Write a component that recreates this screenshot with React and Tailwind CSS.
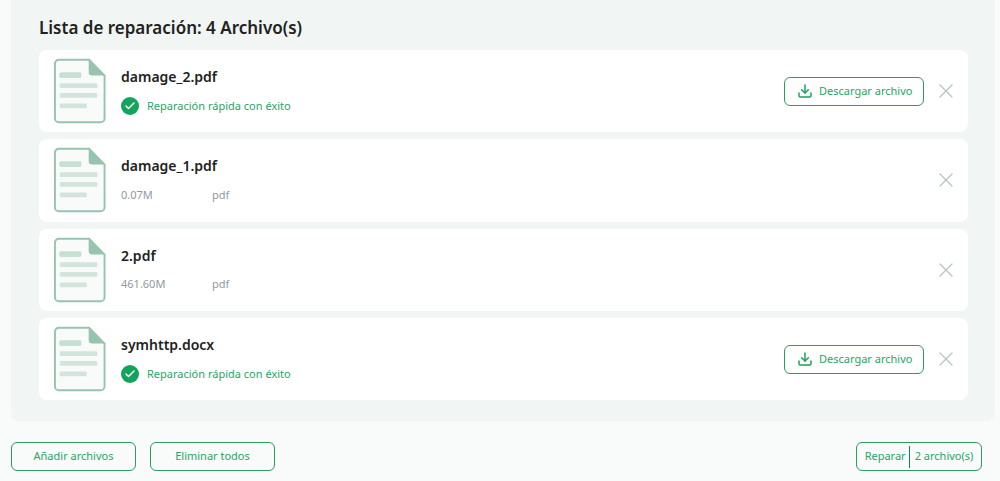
import { Download, X, Check } from 'lucide-react'

const files = [
  { name: 'damage_2.pdf', repaired: true },
  { name: 'damage_1.pdf', size: '0.07M', type: 'pdf' },
  { name: '2.pdf', size: '461.60M', type: 'pdf' },
  { name: 'symhttp.docx', repaired: true },
]

function FileIcon() {
  return (
    <svg width="52" height="66" viewBox="0 0 54 68" fill="none" className="shrink-0">
      <path d="M5 1.5h31.5L52.5 18v44.5a4 4 0 0 1-4 4H5a4 4 0 0 1-4-4v-57a4 4 0 0 1 4-4z" fill="#f8fbfa" stroke="#96c4ae" strokeWidth="2" />
      <path d="M36 1l17 17H40a4 4 0 0 1-4-4z" fill="#96c4ae" />
      <rect x="6" y="15" width="22" height="5" rx="1" fill="#c6e0d4" stroke="#b2d4c4" strokeWidth="0.5" />
      <rect x="6" y="26" width="39" height="5" rx="1" fill="#d2e5dc" />
      <rect x="6" y="36" width="39" height="5" rx="1" fill="#d2e5dc" />
      <rect x="6" y="47" width="28" height="5" rx="1" fill="#d2e5dc" />
    </svg>
  )
}

function FileRow({ file }) {
  return (
    <div className="flex h-[82.3px] items-center rounded-lg bg-white pl-[15px] pr-[10px]">
      <FileIcon />
      <div className="ml-[15px] flex min-w-0 flex-1 flex-col">
        <p className="pt-px text-[14px] leading-[20px] font-semibold text-[#222]">{file.name}</p>
        {file.repaired ? (
          <div className="mt-[9px] flex h-[20px] items-center gap-[8px]">
            <span className="flex h-[18px] w-[18px] items-center justify-center rounded-full bg-[#12a35c]">
              <Check className="h-3 w-3 text-white" strokeWidth={3} />
            </span>
            <span className="text-[11px] text-[#27a566]">Reparación rápida con éxito</span>
          </div>
        ) : (
          <div className="mt-[9px] flex h-[20px] items-center text-[11px] text-[#8f9a9c]">
            <span className="w-[91px]">{file.size}</span>
            <span>{file.type}</span>
          </div>
        )}
      </div>
      {file.repaired && (
        <button className="flex h-[29px] w-[140px] items-center gap-[6px] rounded-md border border-[#2a9d63] pl-[12px] text-[11px] text-[#27a566]">
          <Download className="h-[16px] w-[16px] text-[#12a35c]" strokeWidth={2.2} />
          Descargar archivo
        </button>
      )}
      <button className="ml-[10px] text-[#b9c3c7]">
        <X className="h-[24px] w-[24px]" strokeWidth={1.3} />
      </button>
    </div>
  )
}

export default function App() {
  return (
    <div className="h-[481px] w-[1000px] overflow-hidden bg-[#f9fbfa] pl-[11px] pr-[5px] font-['Noto_Sans',sans-serif]">
      <div className="rounded-b-lg bg-[#f1f5f3] pl-[28px] pr-[27px] pb-[21px]">
        <h2 className="flex h-[50px] items-center pt-[6px] text-[17px] font-semibold text-[#222]">Lista de reparación: 4 Archivo(s)</h2>
        <div className="flex flex-col gap-[7px]">
          {files.map((file) => (
            <FileRow key={file.name} file={file} />
          ))}
        </div>
      </div>
      <div className="mt-[21px] mr-[13px] flex items-center justify-between">
        <div className="flex gap-[14px]">
          <button className="h-[29px] w-[125px] rounded-md border border-[#2a9d63] text-[11px] text-[#27a566]">Añadir archivos</button>
          <button className="h-[29px] w-[125px] rounded-md border border-[#2a9d63] text-[11px] text-[#27a566]">Eliminar todos</button>
        </div>
        <button className="flex h-[29px] w-[126px] items-center justify-center rounded-md border border-[#2a9d63] text-[11px] text-[#27a566]">
          <span className="pr-[3px]">Reparar</span>
          <span className="h-[22px] w-px bg-[#12874d]" />
          <span className="pl-[5px]">2 archivo(s)</span>
        </button>
      </div>
    </div>
  )
}
